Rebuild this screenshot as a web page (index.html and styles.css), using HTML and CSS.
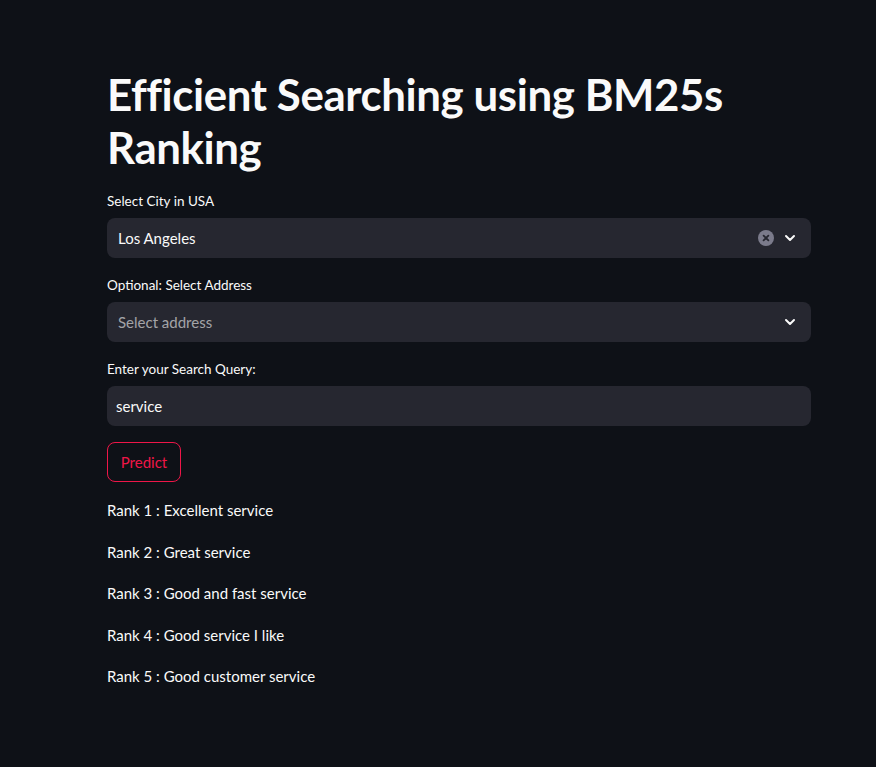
FILE: index.html
```html
<!DOCTYPE html>
<html>
<head>
<meta charset="utf-8">
<link rel="stylesheet" href="styles.css">
</head>
<body>
<main class="main">
  <h1 class="title">Efficient Searching using BM25s Ranking</h1>

  <div class="field">
    <label class="label">Select City in USA</label>
    <div class="select">
      <span class="value">Los Angeles</span>
      <span class="icons">
        <svg class="clear" width="16" height="16" viewBox="0 0 16 16"><circle cx="8" cy="8" r="8" fill="#7b7b8b"/><path d="M5.6 5.6 L10.4 10.4 M10.4 5.6 L5.6 10.4" stroke="#262730" stroke-width="1.8" stroke-linecap="round"/></svg>
        <svg class="chev" width="14" height="14" viewBox="0 0 14 14"><path d="M3 5 L7 9 L11 5" fill="none" stroke="#fafafa" stroke-width="2" stroke-linecap="round" stroke-linejoin="round"/></svg>
      </span>
    </div>
  </div>

  <div class="field">
    <label class="label">Optional: Select Address</label>
    <div class="select">
      <span class="value placeholder">Select address</span>
      <span class="icons">
        <svg class="chev" width="14" height="14" viewBox="0 0 14 14"><path d="M3 5 L7 9 L11 5" fill="none" stroke="#fafafa" stroke-width="2" stroke-linecap="round" stroke-linejoin="round"/></svg>
      </span>
    </div>
  </div>

  <div class="field">
    <label class="label">Enter your Search Query:</label>
    <div class="input"><span class="value-input">service</span></div>
  </div>

  <div class="field">
    <button class="btn">Predict</button>
  </div>

  <p class="rank">Rank 1 : Excellent service</p>
  <p class="rank">Rank 2 : Great service</p>
  <p class="rank">Rank 3 : Good and fast service</p>
  <p class="rank">Rank 4 : Good service I like</p>
  <p class="rank">Rank 5 : Good customer service</p>
</main>
</body>
</html>
```

FILE: styles.css
```css
html, body {
  margin: 0;
  padding: 0;
  background: #0e1117;
  color: #fafafa;
  font-family: "Lato", "Noto Sans", sans-serif;
}
.main {
  width: 704px;
  margin: 0 auto 0 107px;
  padding-top: 68px;
  display: flex;
  flex-direction: column;
}
.title {
  margin: 0 0 16px 0;
  font-size: 43.8px;
  font-weight: 700;
  line-height: 53px;
  letter-spacing: -0.4px;
}
.field {
  display: flex;
  flex-direction: column;
  margin-bottom: 16px;
}
.label {
  font-size: 13.5px;
  line-height: 22px;
  height: 24px;
  margin-bottom: 4px;
  color: #fafafa;
}
.select, .input {
  height: 40px;
  background: #262730;
  border-radius: 8px;
  display: flex;
  align-items: center;
  box-sizing: border-box;
}
.select {
  padding: 0 14px 0 11px;
  justify-content: space-between;
}
.input {
  padding: 0 9px;
}
.value, .value-input {
  font-size: 15px;
  line-height: 20px;
  padding-bottom: 1px;
}
.placeholder {
  color: rgba(250, 250, 250, 0.6);
}
.icons {
  display: flex;
  align-items: center;
  gap: 9px;
}
.btn {
  align-self: flex-start;
  height: 40px;
  width: 74px;
  background: transparent;
  border: 1px solid #ee1648;
  border-radius: 8px;
  color: #ee1648;
  font-family: inherit;
  font-size: 15px;
  padding: 0 0 1px 0;
}
.rank {
  margin: 0 0 16px 0;
  font-size: 15px;
  line-height: 25.6px;
}
```
